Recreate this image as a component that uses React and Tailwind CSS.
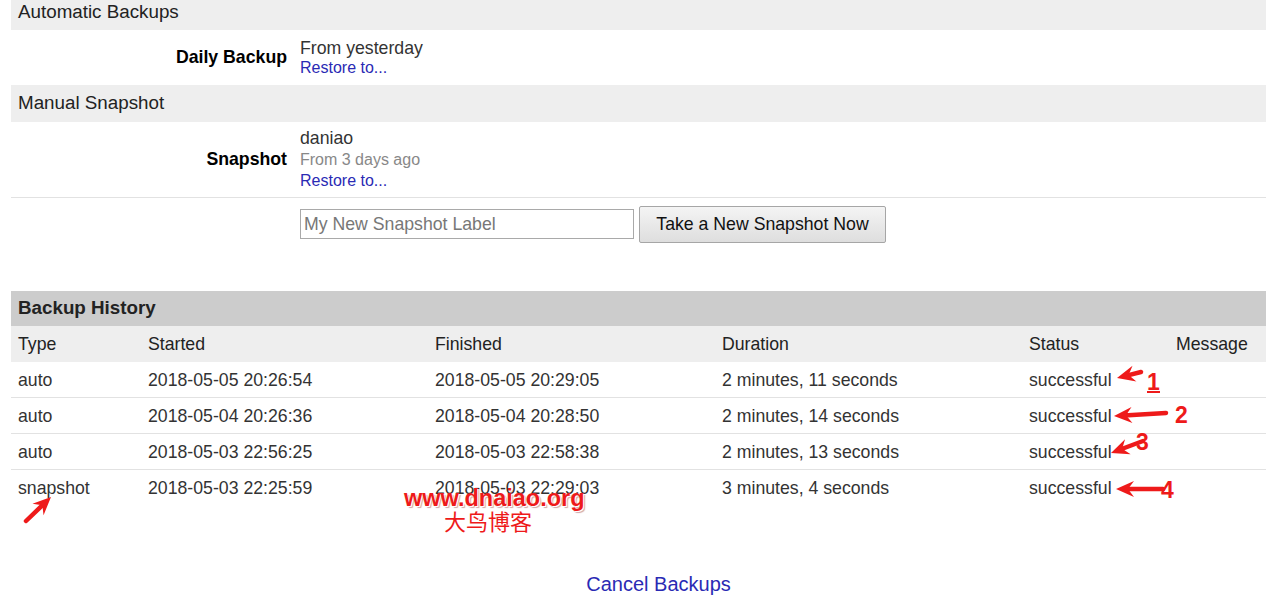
import React from "react";

const history = [
  ["auto", "2018-05-05 20:26:54", "2018-05-05 20:29:05", "2 minutes, 11 seconds", "successful"],
  ["auto", "2018-05-04 20:26:36", "2018-05-04 20:28:50", "2 minutes, 14 seconds", "successful"],
  ["auto", "2018-05-03 22:56:25", "2018-05-03 22:58:38", "2 minutes, 13 seconds", "successful"],
  ["snapshot", "2018-05-03 22:25:59", "2018-05-03 22:29:03", "3 minutes, 4 seconds", "successful"],
];

const cols = "grid grid-cols-[130px_287px_287px_307px_147px_1fr]";

function Arrow({ tx, ty, sx, sy }) {
  const len = Math.hypot(sx - tx, sy - ty);
  const dx = (sx - tx) / len;
  const dy = (sy - ty) / len;
  const bx = tx + dx * 18;
  const by = ty + dy * 18;
  const px = -dy;
  const py = dx;
  const head = [
    [tx, ty],
    [bx + px * 8, by + py * 8],
    [tx + dx * 12, ty + dy * 12],
    [bx - px * 8, by - py * 8],
  ]
    .map((p) => p.join(","))
    .join(" ");
  return (
    <g>
      <line
        x1={tx + dx * 10}
        y1={ty + dy * 10}
        x2={sx}
        y2={sy}
        stroke="#ee1a1a"
        strokeWidth="4.5"
        strokeLinecap="round"
      />
      <polygon points={head} fill="#ee1a1a" />
    </g>
  );
}

function Num({ x, y, children, underline }) {
  return (
    <g>
      <text
        x={x}
        y={y}
        fill="#ee1a1a"
        fontFamily="Liberation Sans, Arial, sans-serif"
        fontWeight="bold"
        fontSize="23"
      >
        {children}
      </text>
      {underline && <line x1={x} y1={y + 2} x2={x + 13} y2={y + 2} stroke="#ee1a1a" strokeWidth="2" />}
    </g>
  );
}

export default function App() {
  return (
    <div className="relative w-full h-[607px] overflow-hidden bg-white text-[#333] font-['Liberation_Sans',Arial,sans-serif]">
      <div className="ml-[11px] w-[1295px] -mt-[6px]">
        <div className="h-[36px] bg-[#eeeeee] flex items-center px-[7px] text-[18.8px] text-[#222]">
          Automatic Backups
        </div>
        <div className="h-[55px] flex items-center">
          <div className="w-[276px] text-right font-bold text-[17.7px] text-black">Daily Backup</div>
          <div className="ml-[13px] flex flex-col">
            <span className="text-[17.7px] leading-[20px]">From yesterday</span>
            <a href="#" className="text-[16px] leading-[20px] text-[#2a2ab4]">
              Restore to...
            </a>
          </div>
        </div>

        <div className="h-[37px] bg-[#eeeeee] flex items-center px-[7px] text-[18.8px] text-[#222]">
          Manual Snapshot
        </div>
        <div className="h-[76px] flex items-center border-b border-[#e2e2e2]">
          <div className="w-[276px] text-right font-bold text-[17.7px] text-black">Snapshot</div>
          <div className="ml-[13px] flex flex-col">
            <span className="text-[17.7px] leading-[21px]">daniao</span>
            <span className="text-[16px] leading-[21px] text-[#888]">From 3 days ago</span>
            <a href="#" className="text-[16px] leading-[21px] text-[#2a2ab4]">
              Restore to...
            </a>
          </div>
        </div>
        <div className="h-[52px] flex items-center">
          <input
            className="ml-[289px] w-[334px] h-[30px] border border-[#a9a9a9] px-[3px] text-[17.7px] placeholder:text-[#777] outline-none"
            placeholder="My New Snapshot Label"
          />
          <button className="ml-[5px] w-[247px] h-[37px] border border-[#a6a6a6] rounded-[2px] bg-gradient-to-b from-[#f4f4f4] to-[#dedede] text-[17.7px] text-[#111]">
            Take a New Snapshot Now
          </button>
        </div>

        <div className="mt-[41px] h-[35px] bg-[#cccccc] flex items-center px-[7px] font-bold text-[18.8px] text-[#222]">
          Backup History
        </div>
        <div className={`${cols} h-[36px] bg-[#eeeeee] items-center text-[17.7px] text-[#222]`}>
          {["Type", "Started", "Finished", "Duration", "Status", "Message"].map((h) => (
            <div key={h} className="px-[7px] pt-[1px]">
              {h}
            </div>
          ))}
        </div>
        {history.map((r, i) => (
          <div
            key={i}
            className={`${cols} h-[36px] items-center text-[17.7px] ${i < 3 ? "border-b border-[#e2e2e2]" : ""}`}
          >
            {r.map((c, j) => (
              <div key={j} className="px-[7px] pt-[1px] whitespace-nowrap">
                {c}
              </div>
            ))}
            <div />
          </div>
        ))}

        <div className="mt-[66px] text-center text-[20px] leading-[24px]">
          <a href="#" className="text-[#2a2ab4]">
            Cancel Backups
          </a>
        </div>
      </div>

      <div className="absolute left-[404px] top-[481px] text-[23.5px] font-bold text-[#ee1a1a] [text-shadow:1px_1px_0_#ffffff,2px_2px_1px_rgba(120,0,0,0.35)]">
        www.dnaiao.org
      </div>
      <div className="absolute left-[444px] top-[507px] text-[22px] leading-[26px] text-[#ee1a1a] font-['Noto_Sans_CJK_SC',sans-serif]">
        大鸟博客
      </div>

      <svg className="absolute left-0 top-0 pointer-events-none" width="1266" height="607">
        <Arrow tx={1117} ty={378} sx={1141} sy={372} />
        <Num x={1147} y={390} underline>
          1
        </Num>
        <Arrow tx={1114} ty={416} sx={1166} sy={413} />
        <Num x={1175} y={423}>
          2
        </Num>
        <Arrow tx={1111} ty={453} sx={1143} sy={441} />
        <Num x={1136} y={450}>
          3
        </Num>
        <Arrow tx={1116} ty={489} sx={1163} sy={489} />
        <Num x={1161} y={498}>
          4
        </Num>
        <Arrow tx={51} ty={497} sx={26} sy={521} />
      </svg>
    </div>
  );
}
